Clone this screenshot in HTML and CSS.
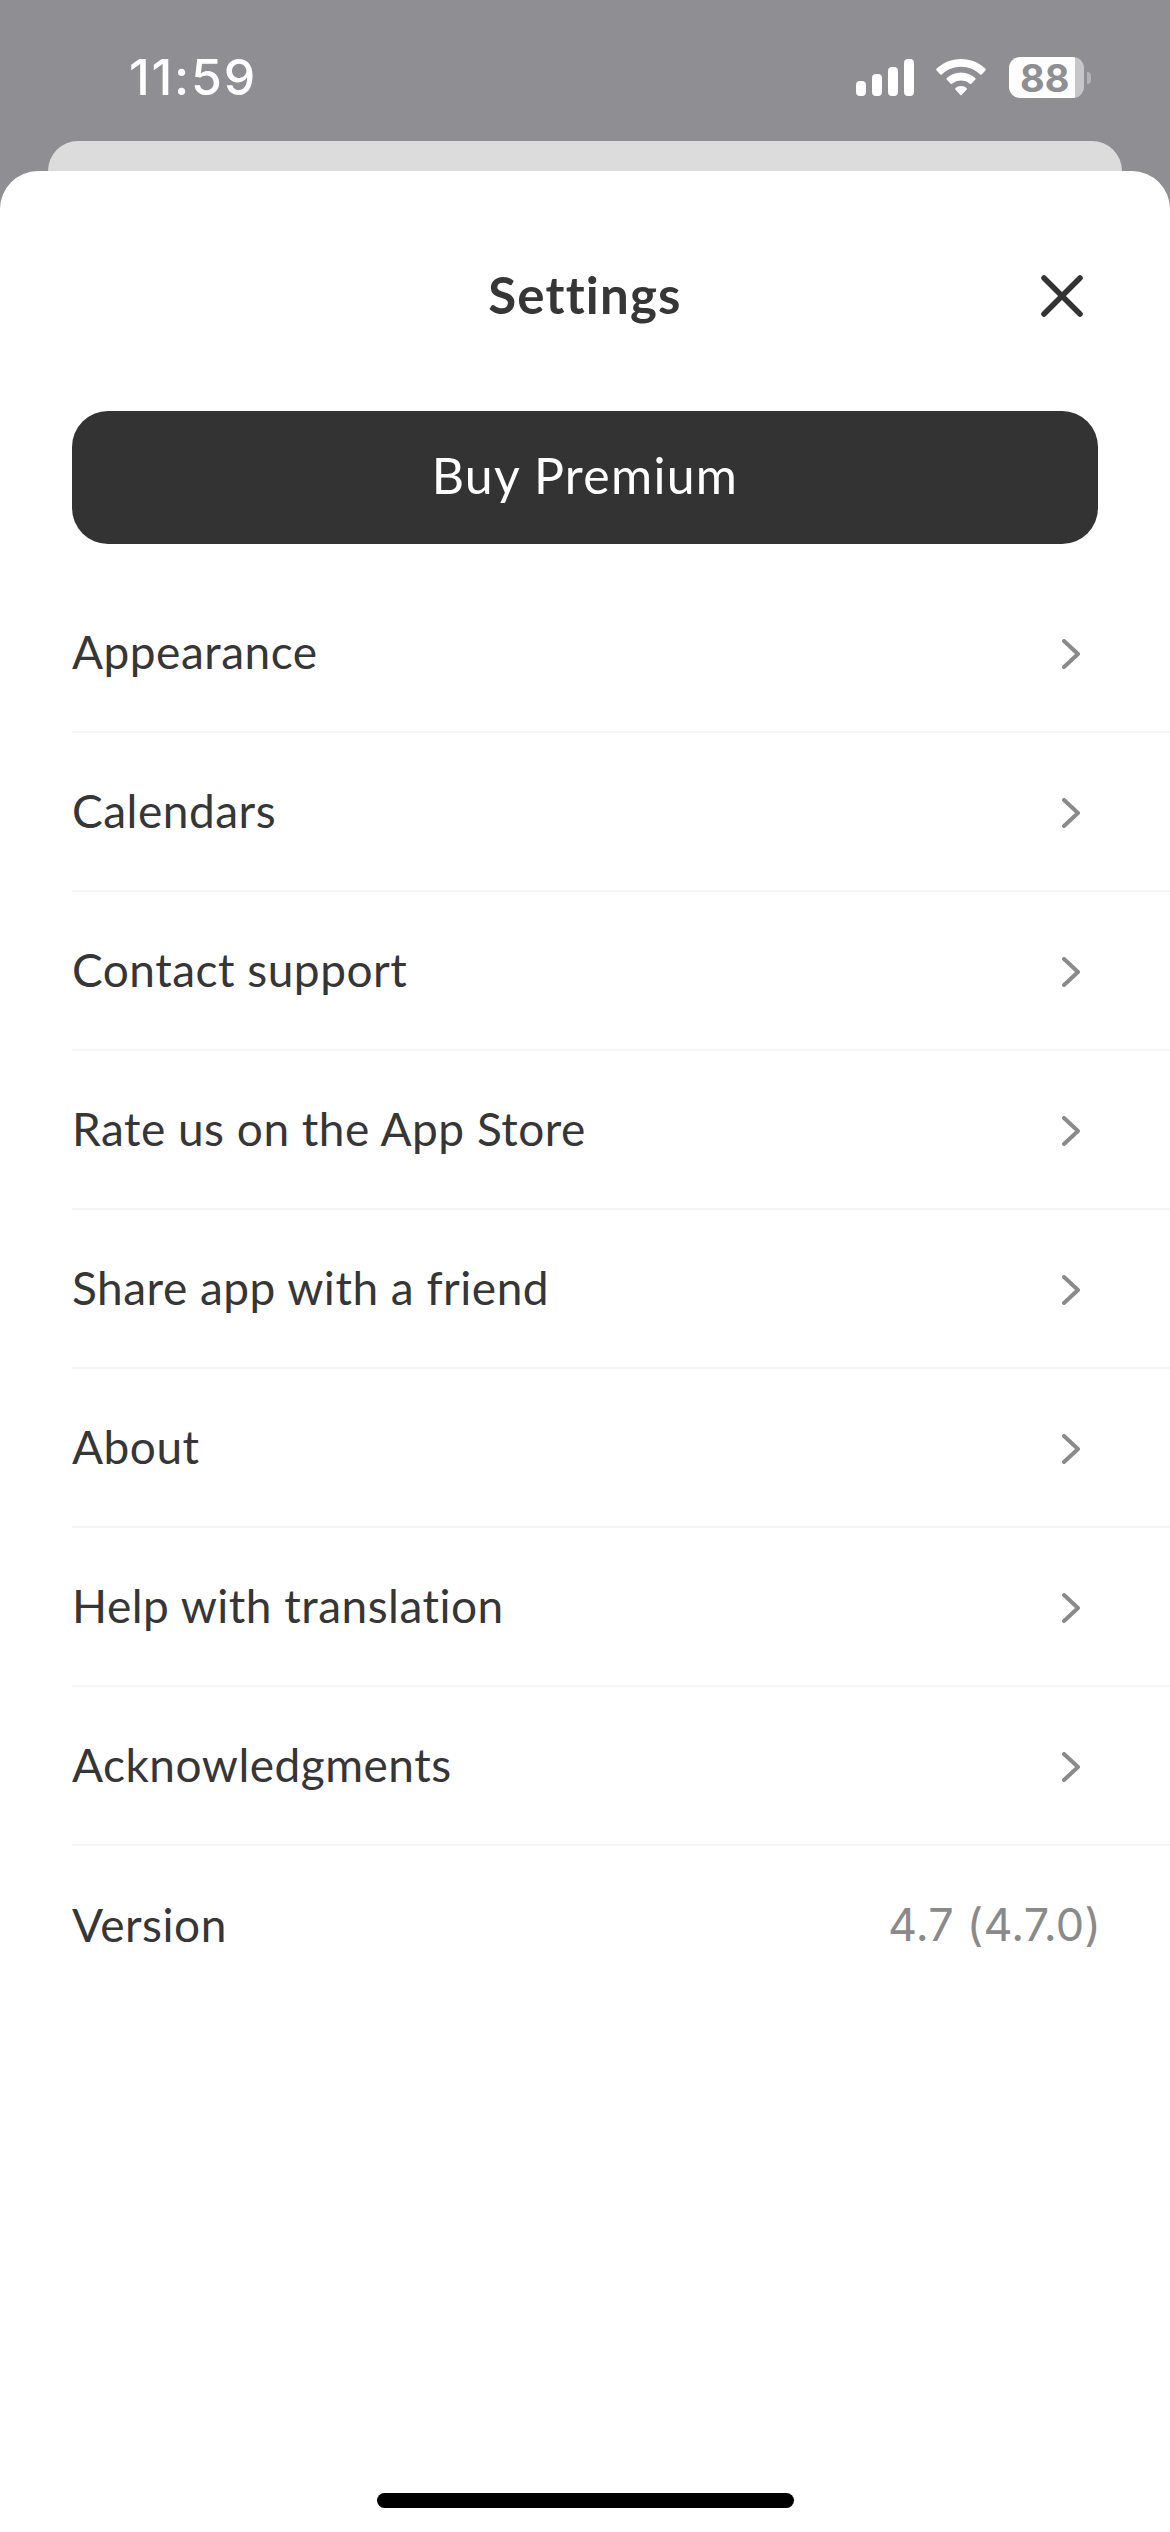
FILE: index.html
```html
<!DOCTYPE html>
<html>
<head>
  <meta name="viewport" content="width=device-width, initial-scale=1">
  <title>Settings</title>
  <link rel="stylesheet" href="styles.css">
</head>
<body>
  <div class="status-bar">
    <span class="time">11:59</span>
    <div class="status-icons">
      <svg class="signal" width="58" height="37" viewBox="0 0 58 37">
        <rect x="0" y="22" width="10" height="15" rx="4" fill="#fff"/>
        <rect x="16" y="15" width="10" height="22" rx="4" fill="#fff"/>
        <rect x="32" y="8" width="10" height="29" rx="4" fill="#fff"/>
        <rect x="48" y="0" width="10" height="37" rx="4" fill="#fff"/>
      </svg>
      <svg class="wifi" width="50" height="37" viewBox="0 0 50 37">
        <path d="M25 0C34.500 0 43.200 3.700 49.600 9.800C50 10.200 50 10.800 49.600 11.200L45.600 15.400C45.200 15.800 44.600 15.800 44.200 15.400C39 10.600 32.400 7.800 25 7.800C17.600 7.800 11 10.600 5.800 15.400C5.400 15.800 4.800 15.800 4.400 15.400L0.400 11.200C0 10.800 0 10.200 0.400 9.800C6.800 3.700 15.500 0 25 0Z" fill="#fff"/>
        <path d="M25 13.500C30.500 13.500 35.500 15.600 39.300 19.100C39.700 19.500 39.700 20.100 39.300 20.500L35.300 24.700C34.900 25.100 34.300 25.100 33.900 24.800C31.400 22.700 28.400 21.500 25 21.500C21.600 21.500 18.600 22.700 16.100 24.800C15.700 25.100 15.100 25.100 14.700 24.700L10.700 20.500C10.300 20.100 10.300 19.500 10.700 19.100C14.500 15.600 19.500 13.500 25 13.500Z" fill="#fff"/>
        <path d="M25 27C27.100 27 29.100 27.700 30.600 29C31 29.400 31 30 30.600 30.400L25.700 36.100C25.300 36.500 24.700 36.500 24.300 36.100L19.400 30.400C19 30 19 29.400 19.400 29C20.900 27.700 22.900 27 25 27Z" fill="#fff"/>
      </svg>
      <div class="battery">
        <div class="battery-body"><span class="battery-level">88</span></div>
        <div class="battery-tip"></div>
      </div>
    </div>
  </div>

  <div class="peek-card"></div>

  <div class="sheet">
    <div class="sheet-header">
      <h1 class="sheet-title">Settings</h1>
      <svg class="close-icon" width="42" height="42" viewBox="0 0 42 42">
        <path d="M3 3L39 39M39 3L3 39" stroke="#333" stroke-width="5.500" stroke-linecap="round" fill="none"/>
      </svg>
    </div>

    <button class="buy-btn">Buy Premium</button>

    <div class="menu">
      <div class="menu-row">
        <span>Appearance</span>
        <svg class="chevron" width="18" height="30" viewBox="0 0 18 30"><path d="M2 2L16 15L2 28" stroke="#8a8a8a" stroke-width="4" stroke-linecap="round" stroke-linejoin="round" fill="none"/></svg>
      </div>
      <div class="menu-row">
        <span>Calendars</span>
        <svg class="chevron" width="18" height="30" viewBox="0 0 18 30"><path d="M2 2L16 15L2 28" stroke="#8a8a8a" stroke-width="4" stroke-linecap="round" stroke-linejoin="round" fill="none"/></svg>
      </div>
      <div class="menu-row">
        <span>Contact support</span>
        <svg class="chevron" width="18" height="30" viewBox="0 0 18 30"><path d="M2 2L16 15L2 28" stroke="#8a8a8a" stroke-width="4" stroke-linecap="round" stroke-linejoin="round" fill="none"/></svg>
      </div>
      <div class="menu-row">
        <span>Rate us on the App Store</span>
        <svg class="chevron" width="18" height="30" viewBox="0 0 18 30"><path d="M2 2L16 15L2 28" stroke="#8a8a8a" stroke-width="4" stroke-linecap="round" stroke-linejoin="round" fill="none"/></svg>
      </div>
      <div class="menu-row">
        <span>Share app with a friend</span>
        <svg class="chevron" width="18" height="30" viewBox="0 0 18 30"><path d="M2 2L16 15L2 28" stroke="#8a8a8a" stroke-width="4" stroke-linecap="round" stroke-linejoin="round" fill="none"/></svg>
      </div>
      <div class="menu-row">
        <span>About</span>
        <svg class="chevron" width="18" height="30" viewBox="0 0 18 30"><path d="M2 2L16 15L2 28" stroke="#8a8a8a" stroke-width="4" stroke-linecap="round" stroke-linejoin="round" fill="none"/></svg>
      </div>
      <div class="menu-row">
        <span>Help with translation</span>
        <svg class="chevron" width="18" height="30" viewBox="0 0 18 30"><path d="M2 2L16 15L2 28" stroke="#8a8a8a" stroke-width="4" stroke-linecap="round" stroke-linejoin="round" fill="none"/></svg>
      </div>
      <div class="menu-row">
        <span>Acknowledgments</span>
        <svg class="chevron" width="18" height="30" viewBox="0 0 18 30"><path d="M2 2L16 15L2 28" stroke="#8a8a8a" stroke-width="4" stroke-linecap="round" stroke-linejoin="round" fill="none"/></svg>
      </div>
      <div class="menu-row version-row">
        <span>Version</span>
        <span class="version-number">4.7 (4.7.0)</span>
      </div>
    </div>

    <div class="home-indicator"></div>
  </div>
</body>
</html>
```

FILE: styles.css
```css
body {
  margin: 0;
  width: 1170px;
  height: 2532px;
  overflow: hidden;
  display: flex;
  flex-direction: column;
  background-color: #8e8e93;
  color: #363636;
  font-family: Lato, "Open Sans", sans-serif;
  font-variant-ligatures: none;
}
.status-bar {
  height: 141px;
  box-sizing: border-box;
  padding: 57px 79px 0 129px;
  display: flex;
  justify-content: space-between;
  align-items: flex-start;
}
.time {
  color: #fff;
  font-family: Inter, sans-serif;
  font-size: 50px;
  font-weight: 500;
  line-height: 41px;
  letter-spacing: 1.800px;
}
.status-icons {
  display: flex;
  align-items: center;
  height: 41px;
}
.signal {
  margin-right: 22px;
}
.wifi {
  margin-right: 23px;
}
.battery {
  display: flex;
  align-items: center;
}
.battery-body {
  width: 75px;
  height: 41px;
  border-radius: 11px;
  background: linear-gradient(to right, #fff 66px, #c6c6c8 66px);
  display: flex;
  align-items: center;
  padding-left: 11px;
  box-sizing: border-box;
}
.battery-level {
  color: #8e8e93;
  font-family: Inter, sans-serif;
  font-size: 38px;
  font-weight: 700;
}
.battery-tip {
  width: 4px;
  height: 12px;
  margin-left: 3px;
  border-radius: 0 6px 6px 0;
  background-color: #b4b4b7;
}
.peek-card {
  height: 30px;
  margin: 0 48px;
  border-radius: 32px 32px 0 0;
  background-color: #dcdcdd;
}
.sheet {
  flex: 1;
  display: flex;
  flex-direction: column;
  padding-left: 72px;
  border-radius: 38px 38px 0 0;
  background-color: #fff;
}
.sheet-header {
  height: 240px;
  padding-right: 87px;
  display: flex;
  align-items: center;
  justify-content: flex-end;
  position: relative;
}
.sheet-title {
  position: absolute;
  left: 0;
  right: 72px;
  margin: 6px 0 0;
  text-align: center;
  font-size: 51px;
  font-weight: 700;
  letter-spacing: 1.200px;
  color: #363636;
}
.close-icon {
  margin-top: 10px;
}
.buy-btn {
  width: 1026px;
  height: 133px;
  padding: 0 0 5px;
  border: none;
  border-radius: 36px;
  background-color: #333;
  color: #fff;
  font-family: inherit;
  font-size: 50px;
  letter-spacing: 1.300px;
  font-variant-ligatures: none;
}
.menu {
  margin-top: 30px;
}
.menu-row {
  height: 159px;
  box-sizing: border-box;
  padding-right: 90px;
  padding-bottom: 3px;
  display: flex;
  align-items: center;
  justify-content: space-between;
  border-bottom: 2px solid #f5f5f5;
  font-size: 46px;
  letter-spacing: 0.500px;
}
.chevron {
  margin-top: 5px;
}
.version-row {
  padding-right: 69px;
  border-bottom: none;
}
.version-number {
  color: #8a8a8a;
  font-family: Inter, sans-serif;
  font-size: 45px;
  letter-spacing: 0.200px;
}
.home-indicator {
  width: 417px;
  height: 15px;
  margin: auto 0 24px 305px;
  border-radius: 8px;
  background-color: #000;
}
```
